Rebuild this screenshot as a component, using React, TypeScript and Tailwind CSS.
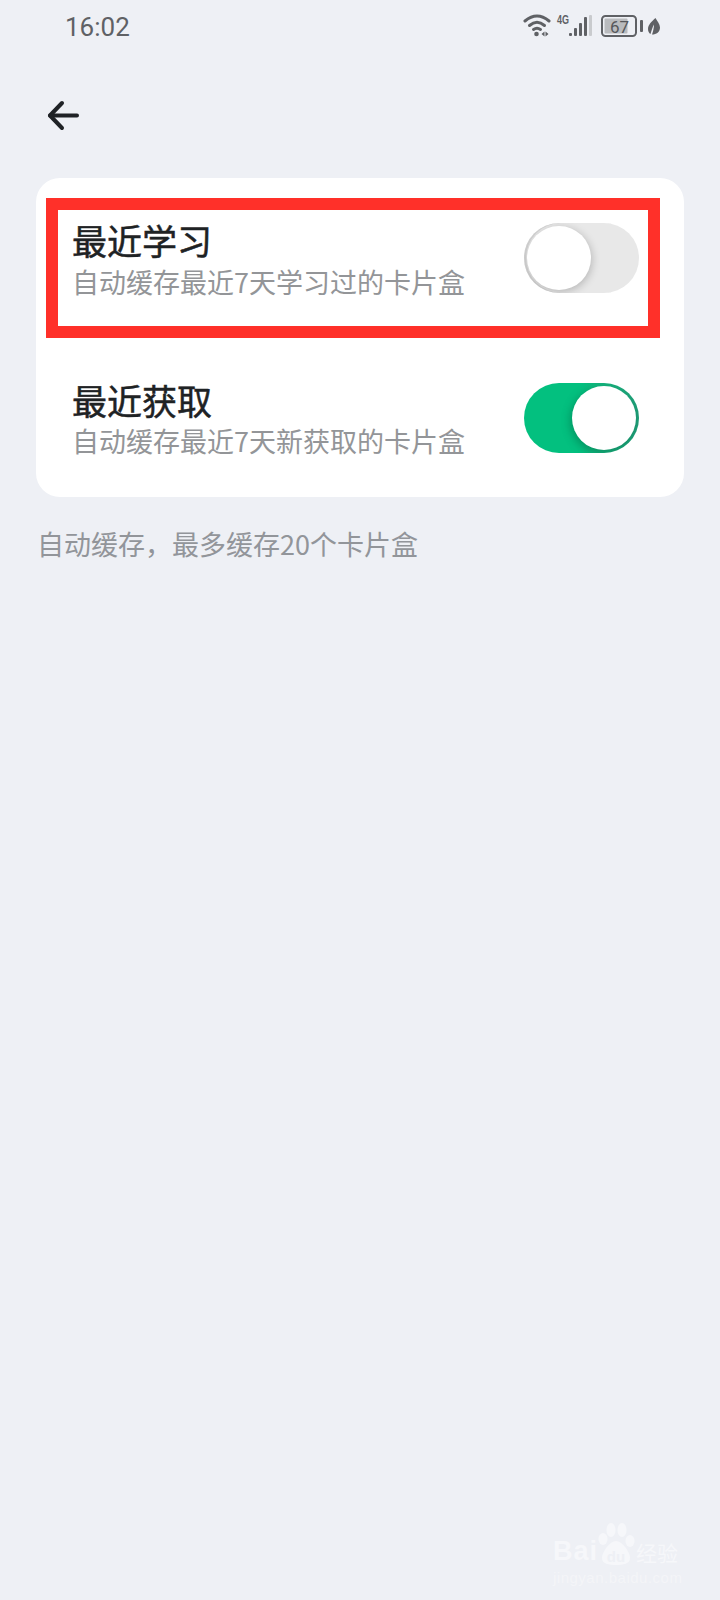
import React from "react";

function StatusIcons() {
  return (
    <svg width="140" height="30" viewBox="0 0 140 30" className="block" aria-hidden="true">
      <g fill="none" stroke="#5f6165" strokeWidth="3" strokeLinecap="round">
        <path d="M3 9Q15 -1 27 9" />
        <path d="M7.500 13.500Q15 7 22.500 13.500" />
        <path d="M11.500 17.500Q15 15 18.500 17.500" />
      </g>
      <circle cx="14.500" cy="22" r="2.300" fill="#5f6165" />
      <path d="M19.500 22l3-2.500v5zM23.500 19.500l3 2.500-3 2.500z" fill="#5f6165" />
      <text x="35" y="12" fontSize="12" fontWeight="700" fill="#5f6165" fontFamily="'Liberation Sans', sans-serif" textLength="12" lengthAdjust="spacingAndGlyphs">4G</text>
      <g fill="#5f6165">
        <rect x="47" y="21" width="3" height="3" rx="1" />
        <rect x="52" y="16" width="3" height="8" rx="1" />
        <rect x="57" y="11" width="3" height="13" rx="1" />
        <rect x="62" y="5" width="3" height="19" rx="1" />
      </g>
      <rect x="67" y="3" width="3" height="21" rx="1" fill="#c9cbce" />
      <rect x="80" y="4" width="34" height="20" rx="3.500" fill="none" stroke="#5f6165" strokeWidth="2" />
      <rect x="82.500" y="6.500" width="23" height="15" rx="1" fill="#b9bbbe" />
      <text x="88" y="21" fontSize="17" fill="#55575b" fontFamily="Roboto, sans-serif">67</text>
      <rect x="118" y="8" width="3" height="12" rx="1" fill="#5f6165" />
      <path d="M133.500 6C129.500 9.500 126 13 126 17C126 19.500 127 21 128.500 22C129.500 18.500 130.500 15 132 12.500C132 16 131 19.500 130 22.500C134.500 22.500 138 20 138 15.500C138 12 135 9 133.500 6Z" fill="#5f6165" />
    </svg>
  );
}

function Toggle({ on }: { on: boolean }) {
  return on ? (
    <div className="flex h-[70px] w-[115px] shrink-0 items-center justify-end overflow-hidden rounded-full bg-gradient-to-r from-[#03c07f] via-[#03c07f] to-[#1f9e78] pr-[3px]">
      <div className="h-[64px] w-[64px] rounded-full bg-white shadow-[-2px_3px_8px_rgba(0,70,45,0.35)]" />
    </div>
  ) : (
    <div className="flex h-[70px] w-[115px] shrink-0 items-center justify-start overflow-hidden rounded-full bg-[#e8e8e8] pl-[3px] shadow-[inset_2px_0_0_#d4d4d4]">
      <div className="h-[64px] w-[64px] rounded-full bg-white shadow-[1px_2px_8px_rgba(0,0,0,0.22)]" />
    </div>
  );
}

export default function App() {
  return (
    <div
      className="relative h-[1600px] w-[720px] overflow-hidden bg-[#eef0f5]"
      style={{ fontFamily: "'Noto Sans CJK SC', 'Noto Sans', sans-serif" }}
    >
      <div className="flex h-[54px] items-center justify-between pl-[65px] pr-[58px]">
        <span className="text-[26px] leading-none text-[#5f6165]" style={{ fontFamily: "Roboto, sans-serif" }}>16:02</span>
        <StatusIcons />
      </div>

      <div className="flex h-[124px] items-start pl-[47px] pt-[46px]">
        <svg width="32" height="32" viewBox="0 0 32 32" fill="none" stroke="#1f2226" strokeWidth="4" strokeLinecap="round" strokeLinejoin="round" aria-hidden="true">
          <path d="M30 15.500H3" />
          <path d="M15 3L3 15.500L15 28" />
        </svg>
      </div>

      <div className="mx-[36px] h-[319px] rounded-[24px] bg-white pt-[20px]">
        <div className="ml-[10px] mr-[24px] flex h-[140px] items-start justify-between border-[12px] border-[#ff3029] pl-[14px] pr-[9px] pt-[10px]">
          <div className="flex flex-col">
            <div className="h-[40px] text-[35px] leading-[40px] font-normal text-[#1e2224] [-webkit-text-stroke:0.5px_#1e2224]">最近学习</div>
            <div className="mt-[5px] h-[34px] text-[27px] leading-[34px] text-[#939598]">自动缓存最近7天学习过的卡片盒</div>
          </div>
          <div className="mt-[3px]"><Toggle on={false} /></div>
        </div>
        <div className="flex items-start justify-between pl-[36px] pr-[45px] pt-[42px]">
          <div className="flex flex-col">
            <div className="h-[40px] text-[35px] leading-[40px] font-normal text-[#1e2224] [-webkit-text-stroke:0.5px_#1e2224]">最近获取</div>
            <div className="mt-[4px] h-[34px] text-[27px] leading-[34px] text-[#939598]">自动缓存最近7天新获取的卡片盒</div>
          </div>
          <div className="mt-[3px]"><Toggle on={true} /></div>
        </div>
      </div>

      <div className="mt-[30px] pl-[37px] text-[27px] leading-[34px] text-[#92959a]">自动缓存，最多缓存20个卡片盒</div>

      <div className="absolute left-[553px] top-[1520px] h-[70px] w-[135px] text-[#f6f7fa]">
        <div className="flex h-[46px] items-end">
          <span className="text-[27px] leading-[30px] font-bold tracking-[1px]" style={{ fontFamily: "'Liberation Sans', sans-serif" }}>Bai</span>
          <svg width="38" height="44" viewBox="0 0 38 44" fill="#f6f7fa" aria-hidden="true" className="-ml-[1px]">
            <ellipse cx="6" cy="17" rx="4.500" ry="6" />
            <ellipse cx="14" cy="8" rx="4.500" ry="7" />
            <ellipse cx="25" cy="8" rx="4.500" ry="7" />
            <ellipse cx="33" cy="19" rx="4.500" ry="6" />
            <path d="M19 19C25 19 33 30 33 36C33 42 26 43 19 43C12 43 5 42 5 36C5 30 13 19 19 19Z" />
            <text x="19" y="40" textAnchor="middle" fontSize="15" fontWeight="700" fill="#eef0f5" fontFamily="'Liberation Sans', sans-serif">du</text>
          </svg>
          <span className="ml-[1px] text-[21px] leading-[28px]">经验</span>
        </div>
        <div className="mt-[3px] text-[15px] leading-[18px] tracking-[0.5px] text-[#f4f5f8]" style={{ fontFamily: "'Liberation Sans', sans-serif" }}>jingyan.baidu.com</div>
      </div>
    </div>
  );
}
